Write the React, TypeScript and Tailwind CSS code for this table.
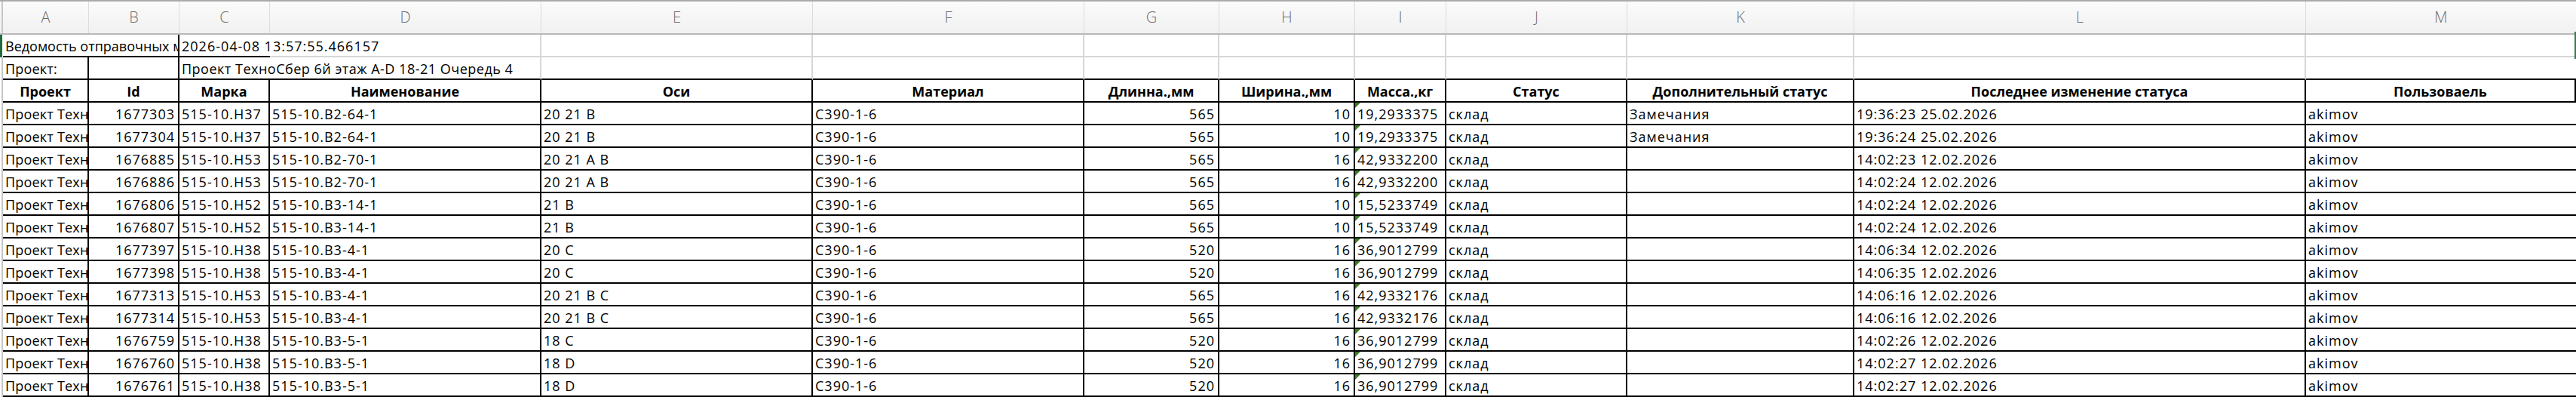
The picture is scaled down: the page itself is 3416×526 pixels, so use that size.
import type { ReactNode } from "react";
import { clsx } from "clsx";

const COLS =
  "grid grid-cols-[4px_114px_120px_120px_360px_360px_360px_179px_180px_121px_240px_301px_599px_358px]";

const LETTERS = ["A", "B", "C", "D", "E", "F", "G", "H", "I", "J", "K", "L", "M"];

const HEADERS = [
  "Проект",
  "Id",
  "Марка",
  "Наименование",
  "Оси",
  "Материал",
  "Длинна.,мм",
  "Ширина.,мм",
  "Масса.,кг",
  "Статус",
  "Дополнительный статус",
  "Последнее изменение статуса",
  "Пользоваель",
];

type Item = {
  id: string;
  mark: string;
  name: string;
  axes: string;
  len: string;
  width: string;
  mass: string;
  extra?: string;
  changed: string;
};

const ROWS: Item[] = [
  { id: "1677303", mark: "515-10.H37", name: "515-10.B2-64-1", axes: "20 21 B", len: "565", width: "10", mass: "19,2933375", extra: "Замечания", changed: "19:36:23 25.02.2026" },
  { id: "1677304", mark: "515-10.H37", name: "515-10.B2-64-1", axes: "20 21 B", len: "565", width: "10", mass: "19,2933375", extra: "Замечания", changed: "19:36:24 25.02.2026" },
  { id: "1676885", mark: "515-10.H53", name: "515-10.B2-70-1", axes: "20 21 A B", len: "565", width: "16", mass: "42,9332200", changed: "14:02:23 12.02.2026" },
  { id: "1676886", mark: "515-10.H53", name: "515-10.B2-70-1", axes: "20 21 A B", len: "565", width: "16", mass: "42,9332200", changed: "14:02:24 12.02.2026" },
  { id: "1676806", mark: "515-10.H52", name: "515-10.B3-14-1", axes: "21 B", len: "565", width: "10", mass: "15,5233749", changed: "14:02:24 12.02.2026" },
  { id: "1676807", mark: "515-10.H52", name: "515-10.B3-14-1", axes: "21 B", len: "565", width: "10", mass: "15,5233749", changed: "14:02:24 12.02.2026" },
  { id: "1677397", mark: "515-10.H38", name: "515-10.B3-4-1", axes: "20 C", len: "520", width: "16", mass: "36,9012799", changed: "14:06:34 12.02.2026" },
  { id: "1677398", mark: "515-10.H38", name: "515-10.B3-4-1", axes: "20 C", len: "520", width: "16", mass: "36,9012799", changed: "14:06:35 12.02.2026" },
  { id: "1677313", mark: "515-10.H53", name: "515-10.B3-4-1", axes: "20 21 B C", len: "565", width: "16", mass: "42,9332176", changed: "14:06:16 12.02.2026" },
  { id: "1677314", mark: "515-10.H53", name: "515-10.B3-4-1", axes: "20 21 B C", len: "565", width: "16", mass: "42,9332176", changed: "14:06:16 12.02.2026" },
  { id: "1676759", mark: "515-10.H38", name: "515-10.B3-5-1", axes: "18 C", len: "520", width: "16", mass: "36,9012799", changed: "14:02:26 12.02.2026" },
  { id: "1676760", mark: "515-10.H38", name: "515-10.B3-5-1", axes: "18 D", len: "520", width: "16", mass: "36,9012799", changed: "14:02:27 12.02.2026" },
  { id: "1676761", mark: "515-10.H38", name: "515-10.B3-5-1", axes: "18 D", len: "520", width: "16", mass: "36,9012799", changed: "14:02:27 12.02.2026" },
];

// bordered cell; `spill` lets text run over the empty cell to the right (no right border)
function Cell({
  children,
  className,
  align = "left",
  spill,
}: {
  children?: ReactNode;
  className?: string;
  align?: "left" | "right" | "center";
  spill?: boolean;
}) {
  return (
    <div
      className={clsx(
        "relative flex h-[30px] items-center whitespace-nowrap border-b-2 border-black pl-[3px] pt-[1px]",
        spill ? "z-10 overflow-visible" : "overflow-hidden border-r-2",
        align === "right" && "justify-end pr-[4px]",
        align === "center" && "justify-center pr-[3px]",
        className,
      )}
    >
      {children}
    </div>
  );
}

function Strip() {
  return <div className="h-[30px] border-r-2 border-[#c6c6c6]" />;
}

export default function App() {
  return (
    <div className="h-[526px] w-[3416px] overflow-hidden bg-white font-['Open_Sans',sans-serif] text-[18px] leading-none tracking-[1px] text-black">
      {/* column letters */}
      <div className={clsx(COLS, "h-[46px] border-t-2 border-b-2 border-t-[#aaaaaa] border-b-[#b9b9b9] bg-gradient-to-b from-[#fbfbfb] to-[#f1f1f1]")}>
        <div className="border-r-2 border-[#c6c6c6]" />
        {LETTERS.map((l, i) => (
          <div
            key={l}
            className={clsx(
              "flex items-center justify-center text-[20px] font-light tracking-normal text-[#6e6e6e]",
              i < LETTERS.length - 1 && "border-r border-[#dcdcdc]",
            )}
          >
            {l}
          </div>
        ))}
      </div>

      {/* row 1 */}
      <div className={COLS}>
        <div className="h-[30px] w-[3px] bg-[#1f6b3b]" />
        <Cell className="col-span-2 tracking-normal">Ведомость отправочных марок</Cell>
        <Cell spill>2026-04-08 13:57:55.466157</Cell>
        {Array.from({ length: 9 }).map((_, i) => (
          <div key={i} className="h-[30px] border-r-2 border-b-2 border-[#d7d7d7]" />
        ))}
        <div className="relative h-[30px] border-b-2 border-[#d7d7d7]">
          <span className="absolute -top-[4px] right-0 h-[36px] w-[2px] bg-[#3d7a4c]" />
        </div>
      </div>

      {/* row 2 */}
      <div className={COLS}>
        <Strip />
        <Cell className="tracking-[0.2px]">Проект:</Cell>
        <Cell />
        <Cell spill className="tracking-[0.5px]">
          Проект ТехноСбер 6й этаж A-D 18-21 Очередь 4
        </Cell>
        {Array.from({ length: 9 }).map((_, i) => (
          <div key={i} className="h-[30px] border-r-2 border-b-2 border-r-[#d7d7d7] border-b-black" />
        ))}
        <div className="h-[30px] border-b-2 border-black" />
      </div>

      {/* header row */}
      <div className={COLS}>
        <Strip />
        {HEADERS.map((h, i) => (
          <Cell key={h} align="center" className={clsx("font-bold tracking-normal", i === HEADERS.length - 1 && "border-r-0")}>
            {h}
          </Cell>
        ))}
      </div>

      {ROWS.map((r) => (
        <div key={r.id} className={COLS}>
          <Strip />
          <Cell className="tracking-[0.2px]">Проект ТехноСбер 6й этаж A-D 18-21 Очередь 4</Cell>
          <Cell align="right">{r.id}</Cell>
          <Cell>{r.mark}</Cell>
          <Cell>{r.name}</Cell>
          <Cell>{r.axes}</Cell>
          <Cell>C390-1-6</Cell>
          <Cell align="right">{r.len}</Cell>
          <Cell align="right">{r.width}</Cell>
          <Cell>
            <span className="absolute left-0 top-0 h-0 w-0 border-t-[7px] border-r-[7px] border-t-[#3b7d23] border-r-transparent" />
            {r.mass}
          </Cell>
          <Cell>склад</Cell>
          <Cell>{r.extra}</Cell>
          <Cell>{r.changed}</Cell>
          <Cell spill>akimov</Cell>
        </div>
      ))}
    </div>
  );
}
